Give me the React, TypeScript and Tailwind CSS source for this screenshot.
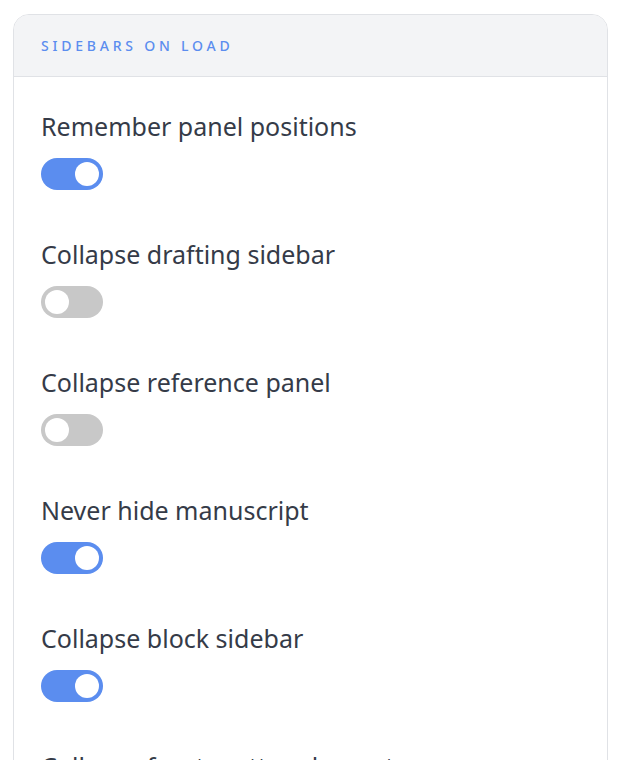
import { useState } from "react";

const initial = [
  { id: "remember", label: "Remember panel positions", on: true },
  { id: "drafting", label: "Collapse drafting sidebar", on: false },
  { id: "reference", label: "Collapse reference panel", on: false },
  { id: "manuscript", label: "Never hide manuscript", on: true },
  { id: "block", label: "Collapse block sidebar", on: true },
  { id: "front", label: "Collapse front matter elements", on: false },
];

function Toggle({ on, onClick }: { on: boolean; onClick: () => void }) {
  return (
    <button
      type="button"
      onClick={onClick}
      className={`relative flex h-8 w-[62px] shrink-0 rounded-full ${on ? "bg-[#5b8def]" : "bg-[#c8c8c8]"}`}
    >
      <span
        className={`absolute top-1 h-6 w-6 rounded-full bg-white ${on ? "left-[34px]" : "left-1"}`}
      />
    </button>
  );
}

export default function App() {
  const [items, setItems] = useState(initial);

  const flip = (id: string) => {
    setItems(items.map((it) => (it.id == id ? { ...it, on: !it.on } : it)));
  };

  return (
    <div className="min-h-screen bg-white pt-[14px] pl-[13px] font-['Noto_Sans',sans-serif]">
      <div className="w-[595px] overflow-hidden rounded-t-2xl border border-[#e0e2e6] bg-white">
        <div className="flex h-[62px] items-center border-b border-[#e0e2e6] bg-[#f3f4f6] px-[27px]">
          <span className="text-[14px] font-medium uppercase tracking-[0.27em] text-[#5b8def]">
            Sidebars on load
          </span>
        </div>
        <div className="flex flex-col gap-12 px-[27px] pt-[33px] pb-12">
          {items.map((it) => (
            <div key={it.id} className="flex flex-col gap-4">
              <div className="text-[25px] leading-8 text-[#353b48]">{it.label}</div>
              <Toggle on={it.on} onClick={() => flip(it.id)} />
            </div>
          ))}
        </div>
      </div>
    </div>
  );
}
